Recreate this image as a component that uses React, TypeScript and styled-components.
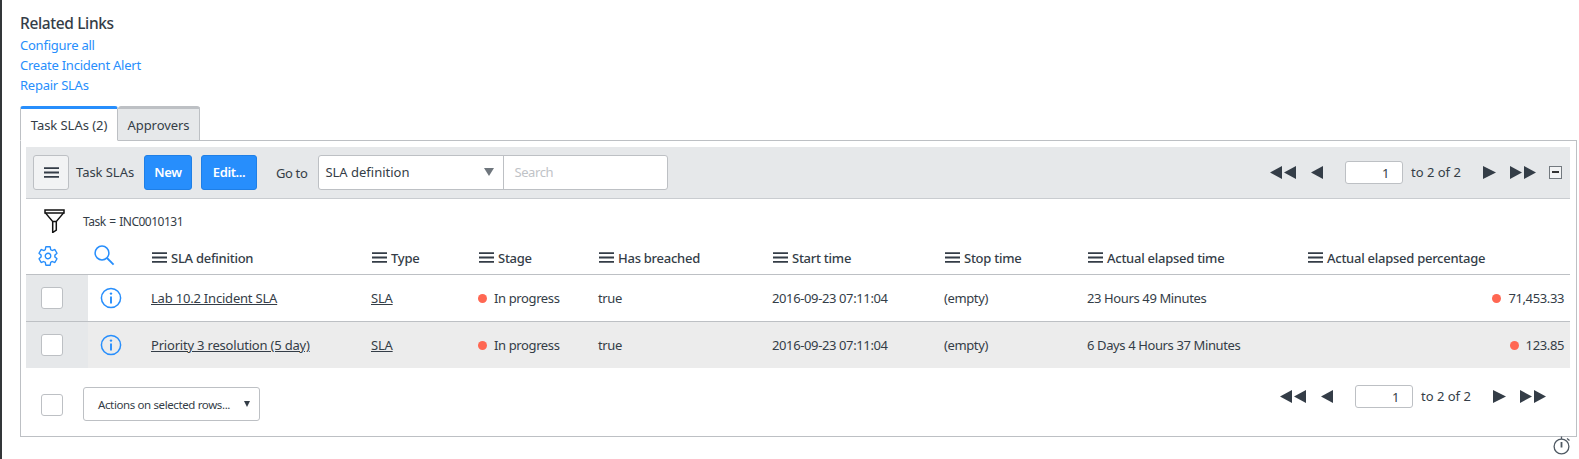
import React from 'react';
import styled, { createGlobalStyle } from 'styled-components';
import { IoSettingsOutline } from 'react-icons/io5';

const TEXT = '#343d47';
const BLUE = '#278efc';
const GRID = '62px 55px 220px 107px 120px 174px 172px 143px 220px 271px';

const GlobalStyle = createGlobalStyle`
  html, body {
    margin: 0;
    padding: 0;
    background: #fff;
  }
  body {
    font-family: "Noto Sans", "Open Sans", sans-serif;
    font-size: 13px;
    letter-spacing: -0.38px;
    color: ${TEXT};
  }
  * {
    box-sizing: border-box;
  }
`;

const columns = [
  'SLA definition',
  'Type',
  'Stage',
  'Has breached',
  'Start time',
  'Stop time',
  'Actual elapsed time',
  'Actual elapsed percentage',
];

const rows = [
  {
    name: 'Lab 10.2 Incident SLA',
    elapsed: '23 Hours 49 Minutes',
    percent: '71,453.33',
  },
  {
    name: 'Priority 3 resolution (5 day)',
    elapsed: '6 Days 4 Hours 37 Minutes',
    percent: '123.85',
  },
];

const MenuIcon = () => (
  <svg width="15" height="11" viewBox="0 0 15 11">
    <path d="M0 1.2h15M0 5.5h15M0 9.8h15" stroke={TEXT} strokeWidth="1.8" />
  </svg>
);

const InfoIcon = () => (
  <svg width="22" height="22" viewBox="0 0 22 22" fill="none">
    <circle cx="11" cy="11" r="9.6" stroke={BLUE} strokeWidth="1.5" />
    <circle cx="11" cy="6.6" r="1.2" fill={BLUE} />
    <path d="M11 9.5v7" stroke={BLUE} strokeWidth="1.9" />
  </svg>
);

const SearchIcon = () => (
  <svg width="21" height="21" viewBox="0 0 21 21" fill="none">
    <circle cx="8" cy="8" r="6.9" stroke={BLUE} strokeWidth="1.5" />
    <path d="M13 13l6.6 6.6" stroke={BLUE} strokeWidth="1.8" />
  </svg>
);

const FunnelIcon = () => (
  <svg width="21" height="24" viewBox="0 0 21 24" fill="none">
    <path d="M1 1h19v3H1z" stroke="#111" strokeWidth="1.5" />
    <path d="M1.5 4l7.200 8.500h3.600L19.500 4" stroke="#111" strokeWidth="1.3" />
    <path d="M8.700 12.500V23.500l3.600-2.500v-8.500" stroke="#111" strokeWidth="1.5" />
  </svg>
);

const TimerIcon = () => (
  <svg width="19" height="19" viewBox="0 0 19 19" fill="none">
    <circle cx="8.500" cy="10.500" r="7.400" stroke="#4f5963" strokeWidth="1.3" />
    <path d="M8.500 0.500v2.500M14 2.500l2.500 2" stroke="#4f5963" strokeWidth="1.3" />
    <path d="M8.500 6v5.500" stroke="#4f5963" strokeWidth="1.800" />
  </svg>
);

const DoubleBack = () => (
  <svg width="26" height="13" viewBox="0 0 26 13">
    <path d="M12 0v13L0 6.500zM26 0v13L14 6.500z" fill={TEXT} />
  </svg>
);

const Back = () => (
  <svg width="12" height="13" viewBox="0 0 12 13">
    <path d="M12 0v13L0 6.500z" fill={TEXT} />
  </svg>
);

const Forward = () => (
  <svg width="13" height="13" viewBox="0 0 13 13">
    <path d="M0 0v13l13-6.500z" fill={TEXT} />
  </svg>
);

const DoubleForward = () => (
  <svg width="26" height="13" viewBox="0 0 26 13">
    <path d="M0 0v13l12-6.500zM14 0v13l12-6.500z" fill={TEXT} />
  </svg>
);

const Pagination = () => (
  <Pager>
    <DoubleBack />
    <PagerBack>
      <Back />
    </PagerBack>
    <PageInput defaultValue="1" />
    <PagerText>to 2 of 2</PagerText>
    <PagerNext>
      <Forward />
    </PagerNext>
    <PagerLast>
      <DoubleForward />
    </PagerLast>
  </Pager>
);

const App = () => {
  return (
    <Page>
      <GlobalStyle />
      <Title>Related Links</Title>
      <LinkList>
        <RelatedLink href="#">Configure all</RelatedLink>
        <RelatedLink href="#">Create Incident Alert</RelatedLink>
        <RelatedLink href="#">Repair SLAs</RelatedLink>
      </LinkList>

      <Tabs>
        <Tab active>Task SLAs (2)</Tab>
        <Tab>Approvers</Tab>
      </Tabs>

      <Panel>
        <Toolbar>
          <MenuButton>
            <MenuIcon />
          </MenuButton>
          <ListTitle>Task SLAs</ListTitle>
          <PrimaryButton width={48}>New</PrimaryButton>
          <PrimaryButton width={56}>Edit...</PrimaryButton>
          <GoTo>Go to</GoTo>
          <SearchGroup>
            <FieldSelect>
              SLA definition
              <SelectCaret />
            </FieldSelect>
            <SearchInput placeholder="Search" />
          </SearchGroup>
          <ToolbarRight>
            <Pagination />
            <CollapseBox />
          </ToolbarRight>
        </Toolbar>

        <FilterRow>
          <FunnelIcon />
          <FilterText>Task = INC0010131</FilterText>
        </FilterRow>

        <HeaderRow>
          <GearCell>
            <IoSettingsOutline size={22} color={BLUE} />
          </GearCell>
          <SearchCell>
            <SearchIcon />
          </SearchCell>
          {columns.map((col) => (
            <HeaderCell key={col}>
              <MenuIcon />
              {col}
            </HeaderCell>
          ))}
        </HeaderRow>

        {rows.map((row, i) => (
          <Row key={row.name} odd={i % 2 === 1}>
            <CheckCell>
              <Checkbox />
            </CheckCell>
            <InfoCell>
              <InfoIcon />
            </InfoCell>
            <Cell>
              <CellLink href="#">{row.name}</CellLink>
            </Cell>
            <Cell>
              <CellLink href="#">SLA</CellLink>
            </Cell>
            <Cell>
              <Dot />
              In progress
            </Cell>
            <Cell>true</Cell>
            <Cell>2016-09-23 07:11:04</Cell>
            <Cell>(empty)</Cell>
            <Cell>{row.elapsed}</Cell>
            <NumberCell>
              <Dot />
              {row.percent}
            </NumberCell>
          </Row>
        ))}

        <Footer>
          <FooterCheck>
            <Checkbox />
          </FooterCheck>
          <ActionsSelect>
            Actions on selected rows...
            <ActionsCaret />
          </ActionsSelect>
          <FooterPager>
            <Pagination />
          </FooterPager>
        </Footer>
      </Panel>

      <TimerRow>
        <TimerIcon />
      </TimerRow>
    </Page>
  );
};

export default App;

const Page = styled.div`
  width: 1579px;
  height: 459px;
  overflow: hidden;
  border-left: 2px solid #333639;
  padding: 13px 0 0 18px;
`;

const Title = styled.div`
  font-size: 15.5px;
  line-height: 20px;
  font-weight: 500;
`;

const LinkList = styled.div`
  display: flex;
  flex-direction: column;
  align-items: flex-start;
  margin-top: 2px;
`;

const RelatedLink = styled.a`
  color: ${BLUE};
  line-height: 20px;
  letter-spacing: -0.24px;
  text-decoration: none;
`;

const Tabs = styled.div`
  display: flex;
  margin-top: 11px;
  height: 35px;
`;

const Tab = styled.div<{ active?: boolean }>`
  display: flex;
  align-items: center;
  justify-content: center;
  width: ${({ active }) => (active ? '98px' : '82px')};
  padding-top: 1px;
  letter-spacing: -0.05px;
  background: ${({ active }) => (active ? '#fff' : '#e6e8ea')};
  border: 1px solid #bdc0c4;
  border-top: 3px solid ${({ active }) => (active ? BLUE : '#bdc0c4')};
  border-left-width: ${({ active }) => (active ? '1px' : '0')};
  border-bottom-color: ${({ active }) => (active ? '#fff' : '#bdc0c4')};
  border-radius: 3px 3px 0 0;
  position: relative;
  z-index: 1;
`;

const Panel = styled.div`
  width: 1557px;
  margin-top: -1px;
  padding: 6px 6px 0 5px;
  border: 1px solid #bdc0c4;
`;

const Toolbar = styled.div`
  display: flex;
  align-items: center;
  height: 52px;
  padding: 0 8px 0 7px;
  background: #e6e8ea;
  border-bottom: 1px solid #c9ccd0;
`;

const MenuButton = styled.button`
  display: flex;
  align-items: center;
  justify-content: center;
  width: 36px;
  height: 35px;
  padding: 0;
  background: #f2f3f4;
  border: 1px solid #bdc0c4;
  border-radius: 3px;
`;

const ListTitle = styled.div`
  width: 58px;
  margin: 0 10px 2px 7px;
  letter-spacing: -0.05px;
  white-space: nowrap;
`;

const PrimaryButton = styled.button<{ width: number }>`
  width: ${({ width }) => width}px;
  height: 35px;
  margin-right: 9px;
  padding: 0 0 2px;
  background: ${BLUE};
  border: 1px solid #1f7fe6;
  border-radius: 3px;
  color: #fff;
  font: inherit;
  font-weight: 600;
  letter-spacing: inherit;
`;

const GoTo = styled.div`
  margin: 1px 11px 0 10px;
  white-space: nowrap;
`;

const SearchGroup = styled.div`
  display: flex;
  height: 35px;
  width: 350px;
  background: #fff;
  border: 1px solid #bdc0c4;
  border-radius: 3px;
`;

const FieldSelect = styled.div`
  position: relative;
  display: flex;
  align-items: center;
  width: 185px;
  padding: 0 0 2px 6px;
  letter-spacing: 0;
  border-right: 1px solid #bdc0c4;
`;

const SelectCaret = styled.span`
  position: absolute;
  top: 12px;
  right: 9px;
  border-left: 5px solid transparent;
  border-right: 5px solid transparent;
  border-top: 8px solid #6f767d;
`;

const SearchInput = styled.input`
  flex: 1;
  min-width: 0;
  padding: 0 10px 2px;
  background: transparent;
  border: 0;
  outline: 0;
  font: inherit;
  letter-spacing: inherit;
  color: ${TEXT};
  &::placeholder {
    color: #bfc3c7;
    opacity: 1;
  }
`;

const ToolbarRight = styled.div`
  display: flex;
  align-items: center;
  margin-left: auto;
`;

const CollapseBox = styled.div`
  position: relative;
  width: 13px;
  height: 13px;
  margin-left: 13px;
  background: #f2f3f4;
  border: 1px solid #73797f;
  &::after {
    content: '';
    position: absolute;
    left: 2px;
    right: 2px;
    top: 4px;
    height: 2px;
    background: #333;
  }
`;

const Pager = styled.div`
  display: flex;
  align-items: center;
`;

const PagerBack = styled.div`
  display: flex;
  margin-left: 15px;
`;

const PageInput = styled.input`
  width: 58px;
  height: 23px;
  margin-left: 22px;
  padding: 0 13px 0 0;
  background: #fff;
  border: 1px solid #bdc0c4;
  border-radius: 3px;
  outline: 0;
  text-align: right;
  font: inherit;
  letter-spacing: inherit;
  color: ${TEXT};
`;

const PagerText = styled.div`
  width: 50px;
  margin: 0 0 2px 8px;
  letter-spacing: 0;
  white-space: nowrap;
`;

const PagerNext = styled.div`
  display: flex;
  margin-left: 22px;
`;

const PagerLast = styled.div`
  display: flex;
  margin-left: 14px;
`;

const FilterRow = styled.div`
  display: flex;
  align-items: center;
  height: 42px;
  padding: 2px 0 0 18px;
`;

const FilterText = styled.div`
  margin-left: 18px;
  font-size: 12px;
  letter-spacing: -0.5px;
  word-spacing: 1px;
`;

const HeaderRow = styled.div`
  display: grid;
  grid-template-columns: ${GRID};
  align-items: center;
  height: 34px;
  border-bottom: 1px solid #bdc0c4;
`;

const GearCell = styled.div`
  display: flex;
  padding: 0 0 4px 11px;
`;

const SearchCell = styled.div`
  display: flex;
  padding: 0 0 4px 6px;
`;

const HeaderCell = styled.div`
  display: flex;
  align-items: center;
  gap: 4px;
  padding-left: 9px;
  font-weight: 500;
  letter-spacing: -0.26px;
  white-space: nowrap;
`;

const Row = styled.div<{ odd: boolean }>`
  display: grid;
  grid-template-columns: ${GRID};
  align-items: center;
  height: ${({ odd }) => (odd ? '46px' : '47px')};
  background: ${({ odd }) => (odd ? '#ececec' : '#fff')};
  border-bottom: ${({ odd }) => (odd ? '0' : '1px solid #bdc0c4')};
`;

const CheckCell = styled.div`
  display: flex;
  align-items: center;
  height: 100%;
  padding-left: 15px;
  background: #e6e8ea;
`;

const Checkbox = styled.div`
  width: 22px;
  height: 22px;
  background: #fff;
  border: 1px solid #bdc0c4;
  border-radius: 3px;
`;

const InfoCell = styled.div`
  display: flex;
  padding-left: 12px;
`;

const Cell = styled.div`
  display: flex;
  align-items: center;
  padding-left: 8px;
  white-space: nowrap;
`;

const NumberCell = styled(Cell)`
  justify-content: flex-end;
  padding-right: 6px;
`;

const CellLink = styled.a`
  color: ${TEXT};
  letter-spacing: -0.2px;
  text-decoration: underline;
`;

const Dot = styled.span`
  width: 9px;
  height: 9px;
  margin-right: 7px;
  border-radius: 50%;
  background: #ff6752;
`;

const Footer = styled.div`
  display: flex;
  align-items: flex-start;
  height: 68px;
  padding: 17px 24px 0 15px;
`;

const FooterCheck = styled.div`
  margin-top: 9px;
`;

const ActionsSelect = styled.div`
  position: relative;
  display: flex;
  align-items: center;
  width: 177px;
  height: 34px;
  margin: 2px 0 0 20px;
  padding-left: 14px;
  font-size: 11.5px;
  background: #fff;
  border: 1px solid #bdc0c4;
  border-radius: 3px;
`;

const ActionsCaret = styled.span`
  position: absolute;
  top: 13px;
  right: 9px;
  border-left: 3.5px solid transparent;
  border-right: 3.5px solid transparent;
  border-top: 6px solid ${TEXT};
`;

const FooterPager = styled.div`
  margin-left: auto;
`;

const TimerRow = styled.div`
  display: flex;
  justify-content: flex-end;
  width: 1552px;
  margin-top: -1px;
`;
